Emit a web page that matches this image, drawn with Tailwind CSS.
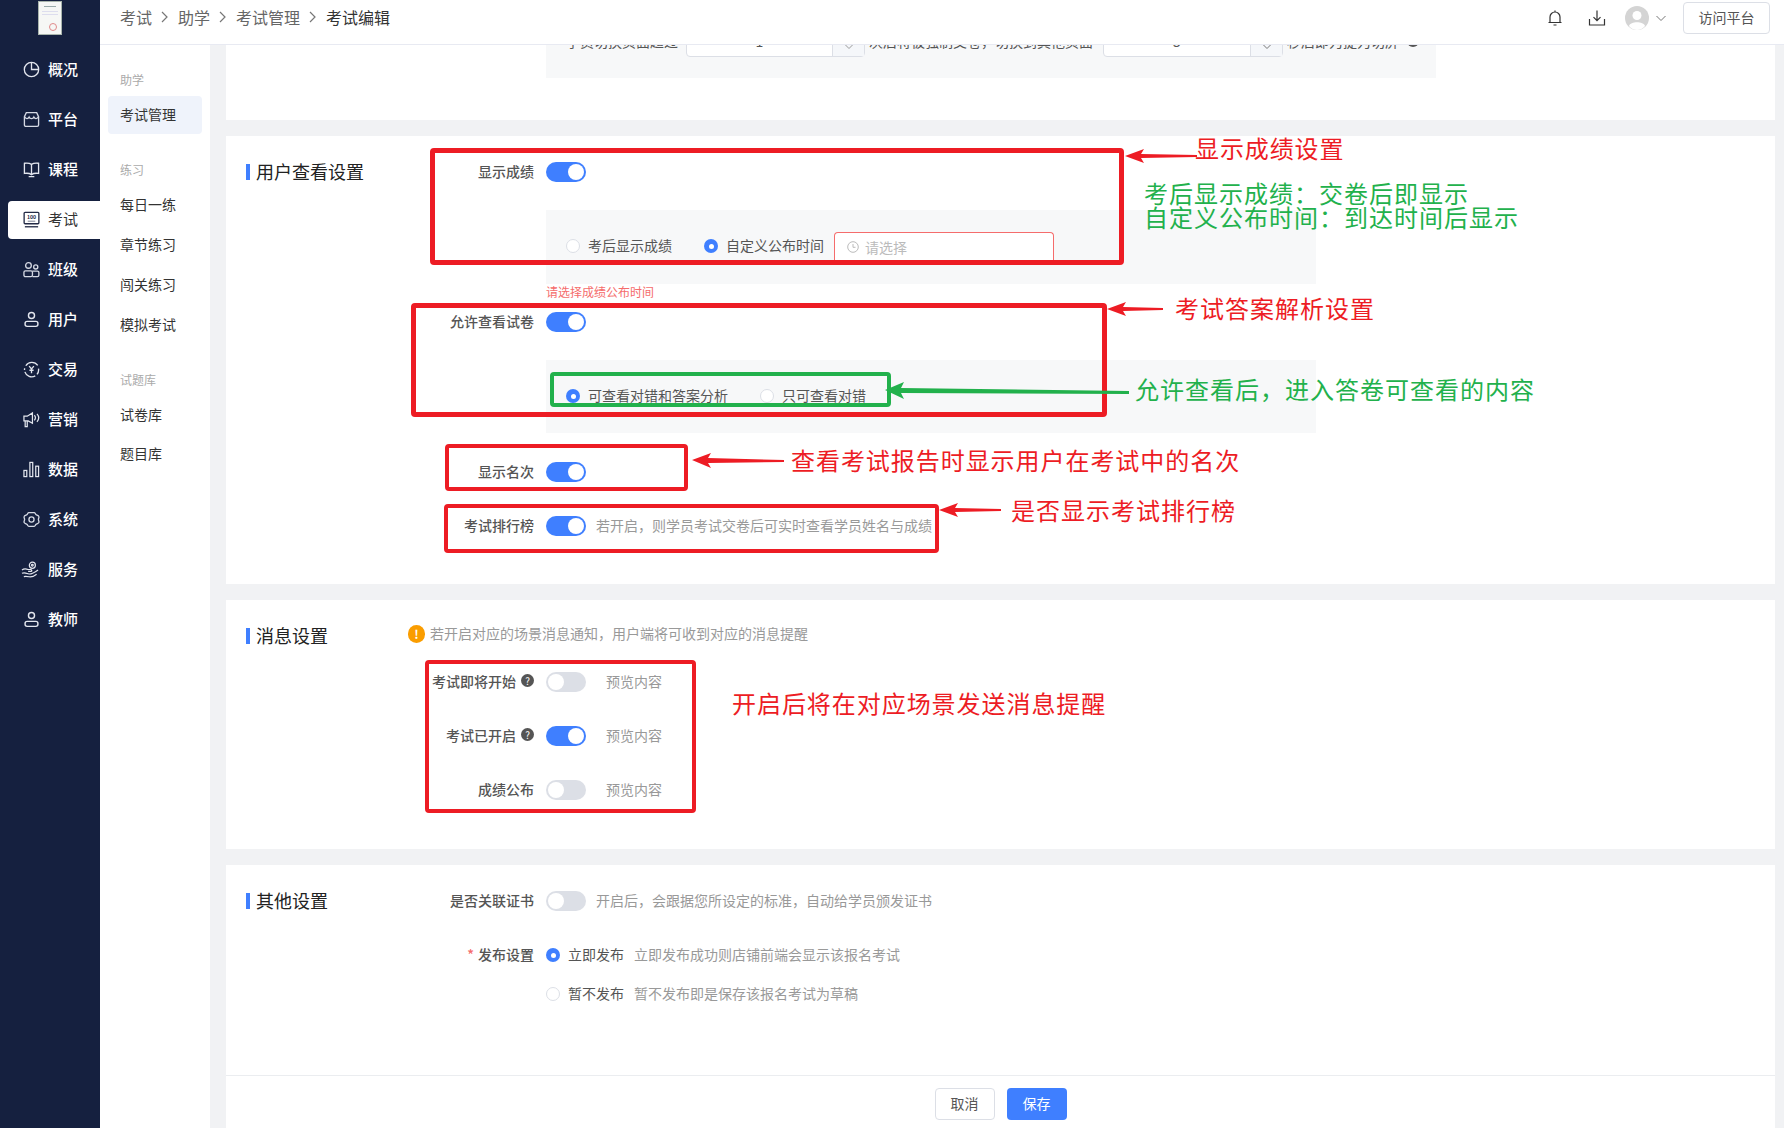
<!DOCTYPE html>
<html lang="zh-CN">

<head>
  <meta charset="UTF-8" />
  <title>考试编辑</title>
  <script src="https://cdn.jsdelivr.net/npm/@tailwindcss/browser@4"></script>
</head>

<body class="relative w-[1784px] h-[1128px] overflow-hidden bg-[#f1f2f4] font-['Noto_Sans_CJK_SC',sans-serif] text-sm text-[#333]">
  <div class="flex h-full">

    <!-- main sidebar -->
    <aside class="w-[100px] h-full bg-[#15203f] text-white text-[15px] font-medium shrink-0">
      <div class="h-[51px] pt-px">
        <div class="relative mx-auto w-6 h-[34px] bg-[#f6f7f5] border border-[#a9b5ad]">
          <div class="mx-auto mt-1 w-3 h-px bg-[#9aa]"></div>
          <div class="mx-auto mt-1 w-4 h-px bg-[#dde]"></div>
          <div class="mx-auto mt-0.5 w-4 h-px bg-[#dde]"></div>
          <div class="absolute right-1 bottom-[3px] w-2 h-2 rounded-full border border-[#e08a8a]"></div>
        </div>
      </div>
      <nav class="flex flex-col gap-3">
        <a class="ml-2 h-[38px] pl-[15px] pb-0.5 flex items-center gap-2">
          <svg class="w-[17px] h-[17px]" viewBox="0 0 18 18" fill="none" stroke="#e3e6ee" stroke-width="1.4"><circle cx="9" cy="9" r="7.6" /><path d="M9 1.4V9h7.6" /></svg>
          概况
        </a>
        <a class="ml-2 h-[38px] pl-[15px] pb-0.5 flex items-center gap-2">
          <svg class="w-[17px] h-[17px]" viewBox="0 0 18 18" fill="none" stroke="#d5d9e4" stroke-width="1.4"><path d="M3.500 1.700h11l2 4.300v8.800a1.500 1.500 0 0 1-1.500 1.500H3a1.500 1.500 0 0 1-1.500-1.500V6z" /><path d="M1.500 6c1.600 2.600 3.900 2.600 5 .4 1 2.200 4 2.200 5 0 1.100 2.200 3.400 2.200 5-.4" /></svg>
          平台
        </a>
        <a class="ml-2 h-[38px] pl-[15px] pb-0.5 flex items-center gap-2">
          <svg class="w-[17px] h-[17px]" viewBox="0 0 18 18" fill="none" stroke="#e3e6ee" stroke-width="1.4"><path d="M9 3.600C7 2.200 4 2 1.500 2.400v10.800c2.500-.4 5.500-.2 7.500 1.200 2-1.400 5-1.600 7.500-1.200V2.400C14 2 11 2.200 9 3.600zM9 3.600v10.800M6 16.500h6" /></svg>
          课程
        </a>
        <a class="ml-2 h-[38px] pl-[15px] pb-0.5 flex items-center gap-2 bg-white rounded-l text-[#333] font-normal">
          <svg class="w-[17px] h-[17px]" viewBox="0 0 18 18" fill="none" stroke="#232b46" stroke-width="1.4"><rect x="1.200" y="1.500" width="15.600" height="12" rx="1" /><path d="M2 16.700h14" /><path d="M5 10.800h8" stroke="#8a8f9f" stroke-width="1.200" /><text x="9" y="8.500" font-size="5.500" font-weight="700" text-anchor="middle" fill="#232b46" stroke="none">100</text></svg>
          考试
        </a>
        <a class="ml-2 h-[38px] pl-[15px] pb-0.5 flex items-center gap-2">
          <svg class="w-[17px] h-[17px]" viewBox="0 0 18 18" fill="none" stroke="#d5d9e4" stroke-width="1.400"><circle cx="5.800" cy="4.700" r="3" /><rect x="1" y="10.500" width="9" height="6" rx="1.500" /><circle cx="13.500" cy="6.300" r="2.200" /><path d="M10 10.700h5.300a1.500 1.500 0 0 1 1.500 1.500v2.800a1.500 1.500 0 0 1-1.500 1.500H10" /></svg>
          班级
        </a>
        <a class="ml-2 h-[38px] pl-[15px] pb-0.5 flex items-center gap-2">
          <svg class="w-[17px] h-[17px]" viewBox="0 0 18 18" fill="none" stroke="#e3e6ee" stroke-width="1.500"><circle cx="9" cy="4.700" r="3.200" /><rect x="2.200" y="11" width="13.600" height="5.300" rx="2.200" /></svg>
          用户
        </a>
        <a class="ml-2 h-[38px] pl-[15px] pb-0.5 flex items-center gap-2">
          <svg class="w-[17px] h-[17px]" viewBox="0 0 18 18" fill="none" stroke="#e3e6ee" stroke-width="1.400"><path d="M3 5a7.500 7.500 0 0 1 12.600-.3M16.400 8a7.500 7.500 0 0 1-1.600 6.200M13 15.700A7.500 7.500 0 0 1 2 11.500M1.600 9.500 1.700 7.600" /><path d="M6.500 5.500 9 8.500l2.500-3M9 8.500v4.500M6.800 9.800h4.400" /></svg>
          交易
        </a>
        <a class="ml-2 h-[38px] pl-[15px] pb-0.5 flex items-center gap-2">
          <svg class="w-[17px] h-[17px]" viewBox="0 0 18 18" fill="none" stroke="#e3e6ee" stroke-width="1.300"><path d="M1 5.500h3.500l5.500-3.500v11L5.500 10.500H1zM2.300 10.500v6h2.200v-6" /><path d="M12 4.500c1.300 1.500 1.300 4 0 5.500M14.800 3c2.200 2.500 2.200 6 0 8.500" /></svg>
          营销
        </a>
        <a class="ml-2 h-[38px] pl-[15px] pb-0.5 flex items-center gap-2">
          <svg class="w-[17px] h-[17px]" viewBox="0 0 18 18" fill="none" stroke="#e3e6ee" stroke-width="1.300"><rect x="1" y="10" width="3" height="6.500" /><rect x="7.300" y="1.500" width="3" height="15" /><rect x="13.500" y="5.500" width="3" height="11" /></svg>
          数据
        </a>
        <a class="ml-2 h-[38px] pl-[15px] pb-0.5 flex items-center gap-2">
          <svg class="w-[17px] h-[17px]" viewBox="0 0 18 18" fill="none" stroke="#d5d9e4" stroke-width="1.400"><path d="M6.200 1.800h5.600c1 0 1.200 1 1.700 1.700.5.700 2.800 1.200 3.300 2.300.5 1-.5 2.200-.5 3.200s1 2.200.5 3.200c-.5 1.100-2.800 1.600-3.300 2.300-.5.700-.7 1.700-1.700 1.700H6.200c-1 0-1.200-1-1.700-1.700C4 13.800 1.700 13.300 1.200 12.200.7 11.200 1.700 10 1.700 9s-1-2.200-.5-3.200C1.700 4.700 4 4.200 4.500 3.500 5 2.800 5.200 1.800 6.200 1.800z" /><circle cx="9" cy="9" r="2.700" /></svg>
          系统
        </a>
        <a class="ml-2 h-[38px] pl-[15px] pb-0.5 flex items-center gap-2">
          <svg class="w-[18px] h-[17px] -ml-0.5 mr-px" viewBox="0 0 19 18" fill="none" stroke="#e3e6ee" stroke-width="1.300"><circle cx="12" cy="4.500" r="3.200" /><circle cx="12" cy="4.500" r=".9" /><path d="M1 9.500c2-1.500 4-1.500 6.500-.5h3c1.200 0 1.200 2 0 2H7.500M1 13c2-1 3.500-.7 5.500.3 2.500 1.200 6 .3 11.500-3.800M3 16.500c2-.7 3.500-.3 5.500.2 3 .6 5.500-.7 8-2.700" /></svg>
          服务
        </a>
        <a class="ml-2 h-[38px] pl-[15px] pb-0.5 flex items-center gap-2">
          <svg class="w-[17px] h-[17px]" viewBox="0 0 18 18" fill="none" stroke="#e3e6ee" stroke-width="1.500"><circle cx="9" cy="4.700" r="3.200" /><rect x="2.200" y="11" width="13.600" height="5.300" rx="2.200" /></svg>
          教师
        </a>
      </nav>
    </aside>

    <div class="flex-1 flex flex-col min-w-0">
      <!-- top bar -->
      <header class="relative z-10 h-[45px] shrink-0 bg-white border-b border-[#e8eaf2] flex items-center pl-5 pr-[14px] pb-2">
        <nav class="flex items-center text-base text-[#666] pb-0.5">
          <span>考试</span>
          <svg class="w-[26px] h-4" viewBox="0 0 26 16" fill="none" stroke="#777" stroke-width="1.200"><path d="M10 3l5 5-5 5" /></svg>
          <span>助学</span>
          <svg class="w-[26px] h-4" viewBox="0 0 26 16" fill="none" stroke="#777" stroke-width="1.200"><path d="M10 3l5 5-5 5" /></svg>
          <span>考试管理</span>
          <svg class="w-[26px] h-4" viewBox="0 0 26 16" fill="none" stroke="#777" stroke-width="1.200"><path d="M10 3l5 5-5 5" /></svg>
          <span class="text-[#333]">考试编辑</span>
        </nav>
        <div class="ml-auto flex items-center">
          <svg class="w-[18px] h-[18px] mr-6" viewBox="0 0 18 18" fill="none" stroke="#333" stroke-width="1.200"><path d="M9 1.500v1.500M4 13.500V8a5 5 0 0 1 10 0v5.500zM2.500 13.500h13M7.500 16h3" /></svg>
          <svg class="w-[18px] h-[18px] mr-[19px]" viewBox="0 0 18 18" fill="none" stroke="#333" stroke-width="1.200"><path d="M9 1.500v10M5.500 8.200 9 11.700l3.500-3.500M1.500 10v6h15v-6" /></svg>
          <svg class="w-6 h-6" viewBox="0 0 24 24"><circle cx="12" cy="12" r="12" fill="#d4d4d4" /><circle cx="12" cy="9.500" r="4.500" fill="#fff" /><path d="M4 20c1.500-5 14.500-5 16 0-2 2.500-5 4-8 4s-6-1.500-8-4z" fill="#fff" /></svg>
          <svg class="w-3 h-3 ml-1.5 mr-4" viewBox="0 0 12 12" fill="none" stroke="#777" stroke-width="1"><path d="M1.500 4 6 8.500 10.500 4" /></svg>
          <button class="w-[87px] h-8 pb-0.5 border border-[#dcdfe6] rounded text-[#555]">访问平台</button>
        </div>
      </header>

      <div class="flex-1 flex min-h-0">
        <!-- sub nav -->
        <aside class="w-[110px] shrink-0 bg-white pt-[27px]">
          <p class="pl-5 h-4 leading-4 text-xs text-[#aaa]">助学</p>
          <a class="block mx-2 mt-2 h-[38px] leading-9 pl-3 bg-[#eff3fb] rounded">考试管理</a>
          <p class="pl-5 mt-7 h-4 leading-4 text-xs text-[#aaa]">练习</p>
          <a class="block pl-5 mt-4 h-5 leading-5">每日一练</a>
          <a class="block pl-5 mt-5 h-5 leading-5">章节练习</a>
          <a class="block pl-5 mt-5 h-5 leading-5">闯关练习</a>
          <a class="block pl-5 mt-5 h-5 leading-5">模拟考试</a>
          <p class="pl-5 mt-[38px] h-4 leading-4 text-xs text-[#aaa]">试题库</p>
          <a class="block pl-5 mt-4 h-5 leading-5">试卷库</a>
          <a class="block pl-5 mt-[19px] h-5 leading-5">题目库</a>
        </aside>

        <!-- content -->
        <main class="flex-1 ml-4 mr-[9px] min-w-0 flex flex-col gap-4">

          <!-- cut off card at the top -->
          <section class="h-[75px] bg-white overflow-hidden shrink-0">
            <div class="ml-[320px] w-[890px] h-[57px] -mt-6 bg-[#f7f8f9] pl-5 flex items-start text-[#555]">
              <div class="flex items-center h-9">
                <span class="w-[112px] pt-1">学员切换页面超过</span>
                <div class="ml-2 w-[179px] h-9 flex border border-[#dcdfe6] rounded bg-white">
                  <span class="flex-1 text-center leading-[38px]">1</span>
                  <span class="w-8 bg-[#f5f7fa] border-l border-[#dcdfe6] flex items-end justify-center pb-1"><svg class="w-3 h-3" viewBox="0 0 12 12" fill="none" stroke="#999" stroke-width="1"><path d="M1.500 4 6 8.500 10.500 4" /></svg></span>
                </div>
                <span class="ml-1 w-[224px] pt-1">次后将被强制交卷，切换到其他页面</span>
                <div class="ml-[10px] w-[180px] h-9 flex border border-[#dcdfe6] rounded bg-white">
                  <span class="flex-1 text-center leading-[38px]">5</span>
                  <span class="w-8 bg-[#f5f7fa] border-l border-[#dcdfe6] flex items-end justify-center pb-1"><svg class="w-3 h-3" viewBox="0 0 12 12" fill="none" stroke="#777" stroke-width="1"><path d="M1.500 4 6 8.500 10.500 4" /></svg></span>
                </div>
                <span class="ml-1 w-[112px] pt-1">秒后即为提为切屏</span>
                <span class="ml-2 mt-1 w-3 h-3 rounded-full bg-[#555]"></span>
              </div>
            </div>
          </section>

          <!-- 用户查看设置 -->
          <section class="h-[448px] bg-white shrink-0 flex">
            <div class="w-[182px] pl-5 pt-7 shrink-0">
              <h2 class="border-l-4 border-[#3f7fff] pl-1.5 h-4 flex items-center text-lg text-[#222]"><span class="pb-0.5">用户查看设置</span></h2>
            </div>
            <div class="flex-1 pt-[26px]">
              <div class="flex items-center h-5">
                <label class="w-[126px] pb-0.5 text-right font-medium text-[#555]">显示成绩</label>
                <span class="ml-3 w-10 h-5 rounded-full bg-[#3f7fff] flex justify-end items-center pr-0.5"><i class="w-4 h-4 rounded-full bg-white"></i></span>
              </div>
              <div class="ml-[138px] w-[770px] h-[74px] mt-7 bg-[#f7f8f9] pl-5 pt-[22px] flex items-start text-[#555]">
                <div class="flex items-center h-7">
                  <i class="w-3.5 h-3.5 rounded-full border border-[#dcdfe6] bg-white"></i>
                  <span class="ml-2 pb-0.5">考后显示成绩</span>
                  <i class="ml-8 w-3.5 h-3.5 rounded-full bg-[#3f7fff] flex items-center justify-center"><b class="w-[5px] h-[5px] rounded-full bg-white"></b></i>
                  <span class="ml-2 pb-0.5">自定义公布时间</span>
                  <div class="ml-2.5 w-[220px] h-7 bg-white border-x border-t border-[#f56c6c] rounded-t flex items-center pl-3 text-[#bbb]">
                    <svg class="w-3 h-3 mr-1.5" viewBox="0 0 12 12" fill="none" stroke="#bbb" stroke-width="1"><circle cx="6" cy="6" r="5.300" /><path d="M6 3v3.300h2.500" /></svg>
                    请选择
                  </div>
                </div>
              </div>
              <p class="ml-[138px] h-4 leading-4 text-xs text-[#f56c6c]">请选择成绩公布时间</p>

              <div class="flex items-center h-5 mt-3">
                <label class="w-[126px] pb-0.5 text-right font-medium text-[#555]">允许查看试卷</label>
                <span class="ml-3 w-10 h-5 rounded-full bg-[#3f7fff] flex justify-end items-center pr-0.5"><i class="w-4 h-4 rounded-full bg-white"></i></span>
              </div>
              <div class="ml-[138px] w-[770px] h-[73px] mt-7 bg-[#f7f8f9] pl-5 pt-[26px] text-[#555]">
                <div class="flex items-center h-5">
                  <i class="w-3.5 h-3.5 rounded-full bg-[#3f7fff] flex items-center justify-center"><b class="w-[5px] h-[5px] rounded-full bg-white"></b></i>
                  <span class="ml-2 pb-0.5">可查看对错和答案分析</span>
                  <i class="ml-8 w-3.5 h-3.5 rounded-full border border-[#dcdfe6] bg-white"></i>
                  <span class="ml-2 pb-0.5">只可查看对错</span>
                </div>
              </div>

              <div class="flex items-center h-5 mt-[29px]">
                <label class="w-[126px] pb-0.5 text-right font-medium text-[#555]">显示名次</label>
                <span class="ml-3 w-10 h-5 rounded-full bg-[#3f7fff] flex justify-end items-center pr-0.5"><i class="w-4 h-4 rounded-full bg-white"></i></span>
              </div>
              <div class="flex items-center h-5 mt-[34px]">
                <label class="w-[126px] pb-0.5 text-right font-medium text-[#555]">考试排行榜</label>
                <span class="ml-3 w-10 h-5 rounded-full bg-[#3f7fff] flex justify-end items-center pr-0.5"><i class="w-4 h-4 rounded-full bg-white"></i></span>
                <span class="ml-2.5 pb-0.5 text-[#999]">若开启，则学员考试交卷后可实时查看学员姓名与成绩</span>
              </div>
            </div>
          </section>

          <!-- 消息设置 -->
          <section class="h-[249px] bg-white shrink-0 flex">
            <div class="w-[182px] pl-5 pt-7 shrink-0">
              <h2 class="border-l-4 border-[#3f7fff] pl-1.5 h-4 flex items-center text-lg text-[#222]"><span class="pb-0.5">消息设置</span></h2>
            </div>
            <div class="flex-1 pt-[25px]">
              <div class="flex items-center h-[18px] text-[#999]">
                <span class="w-[17px] h-[18px] rounded-full bg-[#fa9d00] text-white text-xs font-bold flex items-center justify-center">!</span>
                <span class="ml-[5px] pb-0.5">若开启对应的场景消息通知，用户端将可收到对应的消息提醒</span>
              </div>
              <div class="flex items-center h-5 mt-[29px]">
                <label class="w-[108px] pb-0.5 text-right font-medium text-[#555]">考试即将开始</label>
                <span class="ml-[5px] w-[13px] h-[13px] -mt-1 rounded-full bg-[#555] text-white text-[10px] leading-[13px] text-center">?</span>
                <span class="ml-3 w-10 h-5 rounded-full bg-[#dcdfe6] flex items-center pl-0.5"><i class="w-4 h-4 rounded-full bg-white"></i></span>
                <span class="ml-5 pb-0.5 text-[#999]">预览内容</span>
              </div>
              <div class="flex items-center h-5 mt-[34px]">
                <label class="w-[108px] pb-0.5 text-right font-medium text-[#555]">考试已开启</label>
                <span class="ml-[5px] w-[13px] h-[13px] -mt-1 rounded-full bg-[#555] text-white text-[10px] leading-[13px] text-center">?</span>
                <span class="ml-3 w-10 h-5 rounded-full bg-[#3f7fff] flex justify-end items-center pr-0.5"><i class="w-4 h-4 rounded-full bg-white"></i></span>
                <span class="ml-5 pb-0.5 text-[#999]">预览内容</span>
              </div>
              <div class="flex items-center h-5 mt-[34px]">
                <label class="w-[126px] pb-0.5 text-right font-medium text-[#555]">成绩公布</label>
                <span class="ml-3 w-10 h-5 rounded-full bg-[#dcdfe6] flex items-center pl-0.5"><i class="w-4 h-4 rounded-full bg-white"></i></span>
                <span class="ml-5 pb-0.5 text-[#999]">预览内容</span>
              </div>
            </div>
          </section>

          <!-- 其他设置 -->
          <section class="flex-1 bg-white flex flex-col">
            <div class="flex-1 flex">
              <div class="w-[182px] pl-5 pt-7 shrink-0">
                <h2 class="border-l-4 border-[#3f7fff] pl-1.5 h-4 flex items-center text-lg text-[#222]"><span class="pb-0.5">其他设置</span></h2>
              </div>
              <div class="flex-1 pt-[26px]">
                <div class="flex items-center h-5">
                  <label class="w-[126px] pb-0.5 text-right font-medium text-[#555]">是否关联证书</label>
                  <span class="ml-3 w-10 h-5 rounded-full bg-[#dcdfe6] flex items-center pl-0.5"><i class="w-4 h-4 rounded-full bg-white"></i></span>
                  <span class="ml-2.5 pb-0.5 text-[#999]">开启后，会跟据您所设定的标准，自动给学员颁发证书</span>
                </div>
                <div class="flex items-center h-5 mt-[34px]">
                  <label class="w-[126px] pb-0.5 text-right font-medium text-[#555]"><span class="text-[#f56c6c] mr-1">*</span>发布设置</label>
                  <i class="ml-3 w-3.5 h-3.5 rounded-full bg-[#3f7fff] flex items-center justify-center"><b class="w-[5px] h-[5px] rounded-full bg-white"></b></i>
                  <span class="ml-2 pb-0.5 text-[#555]">立即发布</span>
                  <span class="ml-2.5 pb-0.5 text-[#999]">立即发布成功则店铺前端会显示该报名考试</span>
                </div>
                <div class="flex items-center h-5 mt-[19px]">
                  <i class="ml-[138px] w-3.5 h-3.5 rounded-full border border-[#dcdfe6] bg-white"></i>
                  <span class="ml-2 pb-0.5 text-[#555]">暂不发布</span>
                  <span class="ml-2.5 pb-0.5 text-[#999]">暂不发布即是保存该报名考试为草稿</span>
                </div>
              </div>
            </div>
            <footer class="h-[53px] border-t border-[#ebedf0] pt-3 flex justify-center gap-3">
              <button class="w-[60px] h-8 pb-0.5 border border-[#dcdfe6] rounded text-[#555]">取消</button>
              <button class="w-[60px] h-8 pb-0.5 bg-[#3f7fff] rounded text-white">保存</button>
            </footer>
          </section>
        </main>
      </div>
    </div>
  </div>

  <!-- hand drawn annotations on top of the screenshot -->
  <div class="absolute left-[430px] top-[148px] w-[694px] h-[117px] border-[5px] border-[#ed1c24] rounded-sm"></div>
  <div class="absolute left-[411px] top-[303px] w-[696px] h-[114px] border-[5px] border-[#ed1c24] rounded-sm"></div>
  <div class="absolute left-[445px] top-[444px] w-[243px] h-[47px] border-[4px] border-[#ed1c24] rounded-sm"></div>
  <div class="absolute left-[444px] top-[504px] w-[495px] h-[49px] border-[4px] border-[#ed1c24] rounded-sm"></div>
  <div class="absolute left-[425px] top-[660px] w-[271px] h-[153px] border-[4px] border-[#ed1c24] rounded-sm"></div>
  <div class="absolute left-[550px] top-[372px] w-[341px] h-[35px] border-[4px] border-[#22b14c] rounded-sm"></div>

  <svg class="absolute left-0 top-0 w-[1784px] h-[1128px] pointer-events-none" viewBox="0 0 1784 1128">
    <g fill="#ed1c24">
      <path d="M1125 156l19-7-3 5 56 1v2l-56 1 3 5z" />
      <path d="M1107 309l19-7-3 5 40 1v2l-40 1 3 5z" />
      <path d="M692 460l19-7-3 5 76 2v2l-76 1 3 5z" />
      <path d="M939 510l19-7-3 5 46 1v2l-46 1 3 5z" />
    </g>
    <path d="M885 390l19-8-3 6 228 3v3l-228-1 3 6z" fill="#22b14c" />
  </svg>

  <p class="absolute left-[1195px] top-[133px] text-2xl leading-[30px] text-[#ed1c24] tracking-[0.9px]">显示成绩设置</p>
  <p class="absolute left-[1144px] top-[181px] text-2xl leading-6 text-[#22b14c] tracking-[1px]">考后显示成绩：交卷后即显示<br />自定义公布时间：到达时间后显示</p>
  <p class="absolute left-[1175px] top-[293px] text-2xl leading-[30px] text-[#ed1c24] tracking-[1px]">考试答案解析设置</p>
  <p class="absolute left-[1135px] top-[374px] text-2xl leading-[30px] text-[#22b14c] tracking-[1px]">允许查看后，进入答卷可查看的内容</p>
  <p class="absolute left-[791px] top-[445px] text-2xl leading-[30px] text-[#ed1c24] tracking-[0.95px]">查看考试报告时显示用户在考试中的名次</p>
  <p class="absolute left-[1011px] top-[495px] text-2xl leading-[30px] text-[#ed1c24] tracking-[1px]">是否显示考试排行榜</p>
  <p class="absolute left-[732px] top-[688px] text-2xl leading-[30px] text-[#ed1c24] tracking-[0.95px]">开启后将在对应场景发送消息提醒</p>
</body>

</html>
